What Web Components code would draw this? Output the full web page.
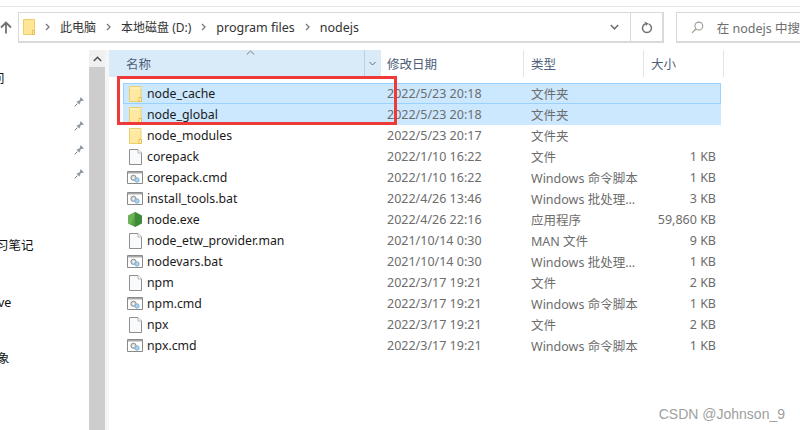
<!DOCTYPE html>
<html>
<head>
<meta charset="utf-8">
<style>
    html, body { margin: 0; height: 100%; overflow: hidden; background: #fff; }
    body { font-family: "Noto Sans", "Noto Sans CJK SC", sans-serif; font-size: 12px; }
</style>
</head>
<body>
<explorer-window>
    <address-bar slot="top"></address-bar>
    <side-nav slot="side"></side-nav>
    <file-list slot="list">
        <file-row name="node_cache" date="2022/5/23 20:18" type="文件夹" icon="folder" selected first></file-row>
        <file-row name="node_global" date="2022/5/23 20:18" type="文件夹" icon="folder" selected></file-row>
        <file-row name="node_modules" date="2022/5/23 20:17" type="文件夹" icon="folder"></file-row>
        <file-row name="corepack" date="2022/1/10 16:22" type="文件" size="1 KB" icon="file"></file-row>
        <file-row name="corepack.cmd" date="2022/1/10 16:22" type="Windows 命令脚本" size="1 KB" icon="cmd"></file-row>
        <file-row name="install_tools.bat" date="2022/4/26 13:46" type="Windows 批处理..." size="3 KB" icon="cmd"></file-row>
        <file-row name="node.exe" date="2022/4/26 22:16" type="应用程序" size="59,860 KB" icon="node"></file-row>
        <file-row name="node_etw_provider.man" date="2021/10/14 0:30" type="MAN 文件" size="9 KB" icon="file"></file-row>
        <file-row name="nodevars.bat" date="2021/10/14 0:30" type="Windows 批处理..." size="1 KB" icon="cmd"></file-row>
        <file-row name="npm" date="2022/3/17 19:21" type="文件" size="2 KB" icon="file"></file-row>
        <file-row name="npm.cmd" date="2022/3/17 19:21" type="Windows 命令脚本" size="1 KB" icon="cmd"></file-row>
        <file-row name="npx" date="2022/3/17 19:21" type="文件" size="2 KB" icon="file"></file-row>
        <file-row name="npx.cmd" date="2022/3/17 19:21" type="Windows 命令脚本" size="1 KB" icon="cmd"></file-row>
    </file-list>
</explorer-window>

<script>
const icons = {
    folder: `<svg width="13" height="16" viewBox="0 0 13 16"><path d="M.5.5h11.500v15H.5z" fill="#ffe9a0" stroke="#eccf6b"/><path d="M1 1h10.500v2H1z" fill="#fff0bb"/><path d="M10 11.500h2.500v4H10z" fill="#fff6d0" stroke="#e3bd4d"/></svg>`,
    file: `<svg width="13" height="16" viewBox="0 0 13 16"><path d="M.5.5h8.500l3.500 3.500v11.500H.5z" fill="#f9fafb" stroke="#8f8f8f"/><path d="M9 .5V4h3.500" fill="#fff" stroke="#b5b5b5"/></svg>`,
    cmd: `<svg width="16" height="13" viewBox="0 0 16 13"><path d="M.5.5h15v12H.5z" fill="#fff" stroke="#8a8a8a"/><path d="M1 1h14v1.500H1z" fill="#a9a9a9"/><circle cx="6.500" cy="6.800" r="2.600" fill="#d8d8d8" stroke="#8c8c8c"/><circle cx="6.500" cy="6.800" r=".9" fill="#fff"/><circle cx="10" cy="9" r="2.200" fill="#a9d3ef" stroke="#6ea5c8" stroke-width=".8"/></svg>`,
    node: `<svg width="14" height="15" viewBox="0 0 14 15"><path d="M7 0l7 3.800v7.400L7 15 0 11.200V3.800z" fill="#5a9e45"/><path d="M7 0l7 3.800v7.400L7 15z" fill="#3f8a38"/><path d="M7 0L0 3.800v7.400L3 13 6 4.500z" fill="#6cb356"/></svg>`
};

class ExplorerWindow extends HTMLElement {
    connectedCallback() {
        const root = this.attachShadow({ mode: 'open' });
        root.innerHTML = `
        <style>
            :host { display: flex; flex-direction: column; position: relative; width: 800px; height: 430px; overflow: hidden; }
            .strip { height: 6px; border-bottom: 1px solid #e3e3e3; flex: none; }
            .main { display: flex; flex: 1; min-height: 0; margin-top: 7px; }
            .scroll { width: 16px; flex: none; display: flex; flex-direction: column; background: #cdcdcd; }
            .arrow { height: 17px; background: #f0f0f0; display: flex; align-items: center; justify-content: center; }
            .track { flex: 1; }
            .gutter { width: 4px; flex: none; background: #f6f6f6; }
            .red { position: absolute; left: 117px; top: 76px; width: 274px; height: 43px; border: 3px solid #ef3a3a; }
            .mark { position: absolute; right: 15px; top: 406px; font: 14px "Liberation Sans", sans-serif; color: #a0a0a0; }
        </style>
        <div class="strip"></div>
        <slot name="top"></slot>
        <div class="main">
            <slot name="side"></slot>
            <div class="scroll">
                <div class="arrow"><svg width="9" height="6" viewBox="0 0 9 6"><path d="M.8 5L4.500 1.300 8.200 5" fill="none" stroke="#505050" stroke-width="1.500"/></svg></div>
                <div class="track"></div>
            </div>
            <div class="gutter"></div>
            <slot name="list"></slot>
        </div>
        <div class="red"></div>
        <div class="mark">CSDN @Johnson_9</div>
        `;
    }
}

class AddressBar extends HTMLElement {
    connectedCallback() {
        const root = this.attachShadow({ mode: 'open' });
        const sep = `<svg width="5" height="8" viewBox="0 0 5 8"><path d="M1 1l3 3-3 3" fill="none" stroke="#7a7a7a" stroke-width="1.300"/></svg>`;
        root.innerHTML = `
        <style>
            :host { display: flex; height: 31px; margin-top: 5px; flex: none; color: #333; font-size: 12.500px; }
            .up { width: 18px; display: flex; align-items: center; flex: none; }
            .bar { width: 646px; box-sizing: border-box; border: 1px solid #d9d9d9; border-right-width: 2px; border-bottom-width: 2px; display: flex; align-items: center; flex: none; }
            .path { flex: 1; display: flex; align-items: center; gap: 10px; padding-left: 4px; white-space: nowrap; }
            .cjk { font-size: 12px; }
            .drop { width: 31px; height: 100%; display: flex; align-items: center; justify-content: center; }
            .refresh { width: 31px; height: 100%; display: flex; align-items: center; justify-content: center; border-left: 1px solid #d9d9d9; }
            .search { margin-left: 12px; flex: 1; box-sizing: border-box; border: 1px solid #d9d9d9; border-right: 0; border-bottom-width: 2px; display: flex; align-items: center; padding-left: 14px; gap: 13px; white-space: nowrap; overflow: hidden; color: #6d6d6d; }
        </style>
        <div class="up"><svg width="12" height="13" viewBox="0 0 12 13"><path d="M6 12.500V2M1 6.500l5-5 5 5" fill="none" stroke="#707070" stroke-width="1.800"/></svg></div>
        <div class="bar">
            <div class="path">
                <svg width="12" height="16" viewBox="0 0 12 16"><path d="M.5.5h11v15H.5z" fill="#ffe596" stroke="#eccf6b"/><path d="M9.500 11.500h2v4h-2z" fill="#fff3c4" stroke="#e3bd4d"/></svg>
                ${sep}<span class="cjk">此电脑</span>${sep}<span class="cjk">本地磁盘 (D:)</span>${sep}<span>program files</span>${sep}<span>nodejs</span>
            </div>
            <div class="drop"><svg width="9" height="6" viewBox="0 0 9 6"><path d="M.8 1L4.500 4.800 8.200 1" fill="none" stroke="#6e6e6e" stroke-width="1.500"/></svg></div>
            <div class="refresh"><svg width="12" height="13" viewBox="0 0 12 13"><path d="M4.500 2.800a4.500 4.500 0 1 0 3.200.1" fill="none" stroke="#737373" stroke-width="1.500"/><path d="M3.500 .5l4 2-2.500 2.500z" fill="#737373"/></svg></div>
        </div>
        <div class="search">
            <svg width="13" height="13" viewBox="0 0 13 13"><circle cx="8" cy="5" r="4" fill="none" stroke="#9a9a9a" stroke-width="1.100"/><path d="M5 8l-4 4" stroke="#a99a7e" stroke-width="1.200"/></svg>
            <span>在 nodejs 中搜</span>
        </div>
        `;
    }
}

class SideNav extends HTMLElement {
    connectedCallback() {
        const root = this.attachShadow({ mode: 'open' });
        const pin = `<svg width="11" height="11" viewBox="0 0 11 11"><path d="M.5 10.500L3.500 7.500" stroke="#7d8b96" stroke-width="1"/><path d="M2.500 5.500L5.800 4.300 6.500 1 10 4.500 6.700 5.200 5.500 8.500z" fill="#8b98a2"/></svg>`;
        root.innerHTML = `
        <style>
            :host { display: block; width: 89px; flex: none; font-size: 12.500px; color: #111; overflow: hidden; }
            .item { height: 24px; display: flex; align-items: center; white-space: nowrap; }
            .item svg { margin-left: auto; margin-right: 4px; }
            .top { margin-top: 15px; }
            .top span { margin-left: -8px; }
            .note { margin-top: 47px; }
            .note span { margin-left: -4px; }
            .ve { margin-top: 34px; }
            .ve span { margin-left: -2px; }
            .obj { margin-top: 31px; }
            .obj span { margin-left: -3px; }
        </style>
        <div class="item top"><span>问</span></div>
        <div class="item">${pin}</div>
        <div class="item">${pin}</div>
        <div class="item">${pin}</div>
        <div class="item">${pin}</div>
        <div class="item note"><span>习笔记</span></div>
        <div class="item ve"><span>ve</span></div>
        <div class="item obj"><span>象</span></div>
        `;
    }
}

class FileList extends HTMLElement {
    connectedCallback() {
        const root = this.attachShadow({ mode: 'open' });
        root.innerHTML = `
        <style>
            :host { display: block; flex: 1; min-width: 0; }
            .head { height: 27px; display: flex; color: #4c607a; font-size: 12.500px; position: relative; }
            .head > div { display: flex; align-items: center; box-sizing: border-box; border-right: 1px solid #e3e3e3; }
            .name { width: 272px; background: #d9ebf9; padding-left: 17px; border-right-color: #d9ebf9 !important; position: relative; }
            .date { width: 143px; padding-left: 6px; }
            .type { width: 120px; padding-left: 7px; }
            .size { width: 80px; padding-left: 7px; }
            .sort { position: absolute; left: 137px; top: 0; }
            .menu { position: absolute; right: 0; top: 0; bottom: 0; width: 15px; border-left: 1px solid #bcd0e0; display: flex; align-items: center; justify-content: center; }
            .rows { margin: 6px 0 0 14px; width: 598px; }
        </style>
        <div class="head">
            <div class="name">名称
                <svg class="sort" width="9" height="5" viewBox="0 0 9 5"><path d="M.8 4.500L4.500 1 8.200 4.500" fill="none" stroke="#7a7a7a"/></svg>
                <span class="menu"><svg width="7" height="5" viewBox="0 0 7 5"><path d="M.5 1l3 3 3-3" fill="none" stroke="#5e6f80"/></svg></span>
            </div>
            <div class="date">修改日期</div>
            <div class="type">类型</div>
            <div class="size">大小</div>
        </div>
        <div class="rows"><slot></slot></div>
        `;
    }
}

class FileRow extends HTMLElement {
    connectedCallback() {
        const root = this.attachShadow({ mode: 'open' });
        const get = k => this.getAttribute(k) || '';
        root.innerHTML = `
        <style>
            :host { display: grid; grid-template-columns: 264px 144px 112px 73px; height: 21px; box-sizing: border-box; align-items: center; white-space: nowrap; font-size: 12.500px; color: #6d6d6d; }
            :host([selected]) { background: #cce8ff; }
            :host([first]) { outline: 1px solid #99d1ff; outline-offset: -1px; }
            .name { display: flex; align-items: center; color: #1a1a1a; font-size: 12.300px; }
            .ico { width: 24px; display: flex; align-items: center; justify-content: center; }
            .size { text-align: right; }
        </style>
        <div class="name"><span class="ico">${icons[get('icon')]}</span>${get('name')}</div>
        <div>${get('date')}</div>
        <div>${get('type')}</div>
        <div class="size">${get('size')}</div>
        `;
    }
}

customElements.define('explorer-window', ExplorerWindow);
customElements.define('address-bar', AddressBar);
customElements.define('side-nav', SideNav);
customElements.define('file-list', FileList);
customElements.define('file-row', FileRow);
</script>
</body>
</html>
